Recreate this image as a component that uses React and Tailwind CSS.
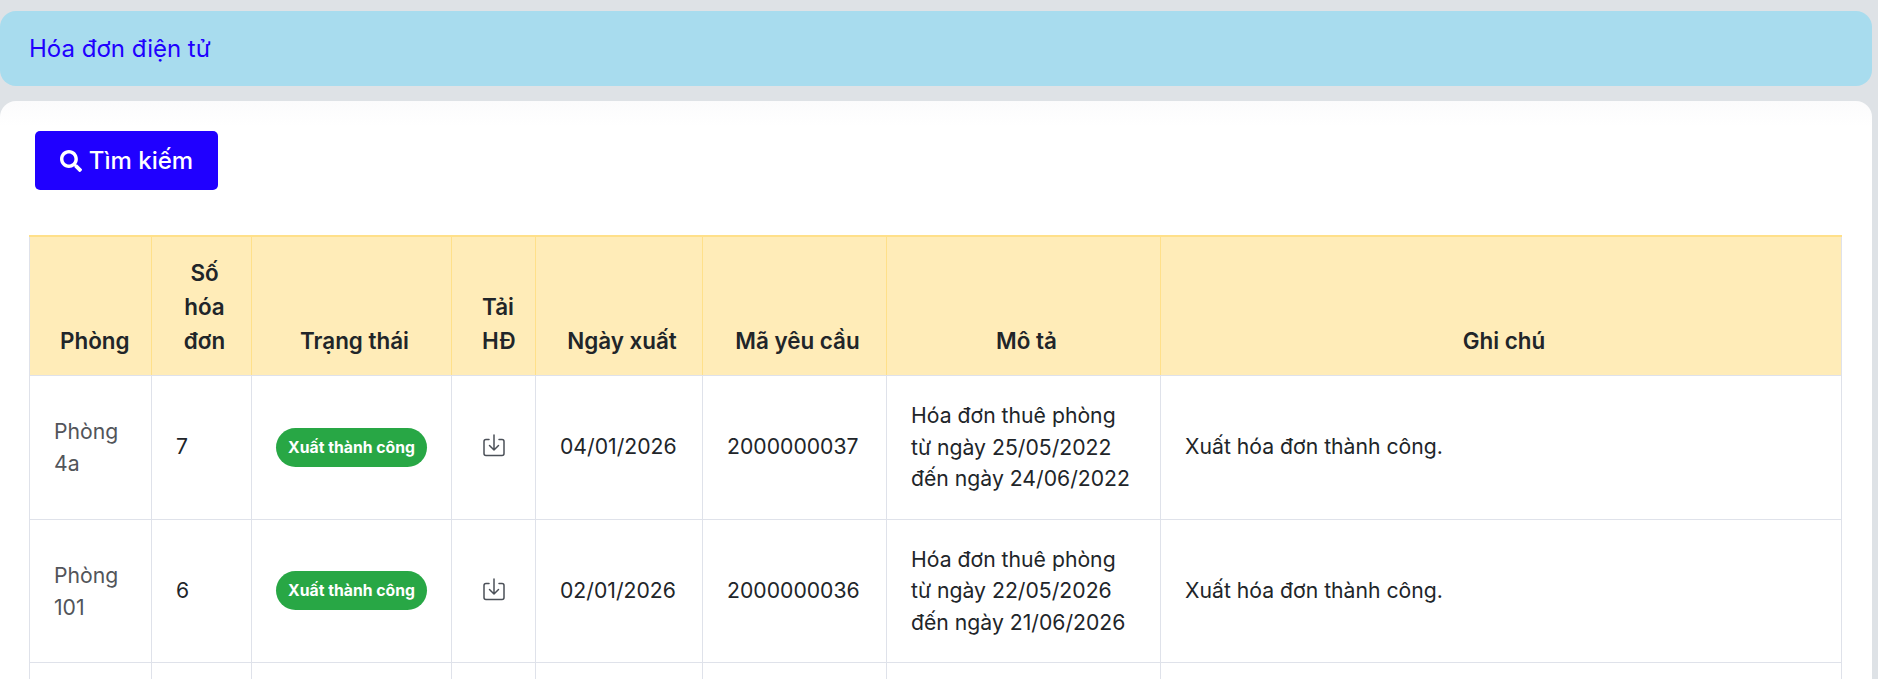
import { useState } from "react";
import { FaSearch } from "react-icons/fa";

const columns = [
  { label: "Phòng", width: "w-[122px]" },
  { label: "Số hóa đơn", width: "w-[100px]" },
  { label: "Trạng thái", width: "w-[200px]" },
  { label: "Tải HĐ", width: "w-[84px]" },
  { label: "Ngày xuất", width: "w-[167px]" },
  { label: "Mã yêu cầu", width: "w-[184px]" },
  { label: "Mô tả", width: "w-[274px]" },
  { label: "Ghi chú", width: "w-[681px]" },
];

const invoices = [
  { room: "Phòng 4a", no: 7, date: "04/01/2026", code: "2000000037", desc: "Hóa đơn thuê phòng từ ngày 25/05/2022 đến ngày 24/06/2022" },
  { room: "Phòng 101", no: 6, date: "02/01/2026", code: "2000000036", desc: "Hóa đơn thuê phòng từ ngày 22/05/2026 đến ngày 21/06/2026" },
  { room: "", no: "", date: "", code: "", desc: "", empty: true },
];

function DownloadIcon() {
  return (
    <svg width="22" height="23" viewBox="0 0 22 23" fill="none" stroke="#4b5058" strokeWidth="1.5" strokeLinecap="round" strokeLinejoin="round" className="mx-auto -mt-[3px] block">
      <path d="M6 5.5H3A2 2 0 0 0 1 7.5v12A2 2 0 0 0 3 21.5h16a2 2 0 0 0 2-2v-12A2 2 0 0 0 19 5.5h-3" />
      <path d="M11 1v15M6.5 11.5 11 16l4.5-4.5" />
    </svg>
  );
}

export default function App() {
  const [rows] = useState(invoices);

  return (
    <div className="h-[679px] overflow-hidden bg-[#dee2e6] pt-[11px] pr-[6px] font-['Inter',sans-serif] text-[#212529]">
      <div className="flex h-[75px] items-center rounded-2xl bg-[#a8dcee] px-[29px]">
        <h1 className="text-[24px] text-[#2000ff]">Hóa đơn điện tử</h1>
      </div>

      <div className="mt-[15px] h-[700px] rounded-2xl bg-[linear-gradient(#fbfbfc,#ffffff_25px)] pt-[30px] pl-[29px]">
        <button className="ml-[6px] flex h-[59px] w-[183px] items-center justify-center gap-[7px] rounded-[5px] bg-[#2000ff] text-[24px] font-medium text-white">
          <FaSearch size={22} />
          Tìm kiếm
        </button>

        <table className="mt-[45px] w-[1812px] table-fixed border-collapse text-[21.2px]">
          <thead>
            <tr className="bg-[#ffecb8]">
              {columns.map((c) => (
                <th key={c.label} className={`${c.width} border border-t-2 border-[#ffe08a] border-b-[#dfe2ea] pt-[19px] pr-6 pb-[17px] pl-[30px] text-center align-bottom text-[22.4px] leading-[34px] font-semibold first:border-l-[#dfe2ea] last:border-r-[#dfe2ea]`}>
                  {c.label}
                </th>
              ))}
            </tr>
          </thead>
          <tbody>
            {rows.map((r, i) => (
              <tr key={i} className="h-[143.5px]">
                <td className="border border-[#dfe2ea] px-6 leading-[32px] text-[#52555a]">{r.room}</td>
                <td className="border border-[#dfe2ea] px-6">{r.no}</td>
                <td className="border border-[#dfe2ea] text-center">
                  {!r.empty && (
                    <span className="inline-block rounded-full bg-[#28a745] px-[12.5px] py-[7px] text-[15.75px] leading-[25px] font-bold whitespace-nowrap text-white">
                      Xuất thành công
                    </span>
                  )}
                </td>
                <td className="border border-[#dfe2ea]">
                  {!r.empty && <DownloadIcon />}
                </td>
                <td className="border border-[#dfe2ea] px-6">{r.date}</td>
                <td className="border border-[#dfe2ea] px-6">{r.code}</td>
                <td className="border border-[#dfe2ea] px-6 leading-[31.5px]">{r.desc}</td>
                <td className="border border-[#dfe2ea] px-6">{!r.empty && "Xuất hóa đơn thành công."}</td>
              </tr>
            ))}
          </tbody>
        </table>
      </div>
    </div>
  );
}
